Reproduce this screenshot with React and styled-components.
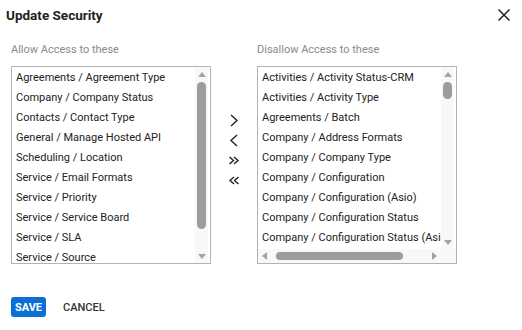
import styled, { createGlobalStyle } from "styled-components";

const GlobalStyle = createGlobalStyle`
  body {
    margin: 0;
    background: #fff;
    font-family: Roboto, "Liberation Sans", sans-serif;
    color: #222;
  }
`;

const Dialog = styled.div`
  width: 522px;
  height: 330px;
  box-sizing: border-box;
  padding: 0 11px;
`;

const Header = styled.div`
  display: flex;
  align-items: center;
  justify-content: space-between;
  height: 30px;
  margin: 0 0 0 -5px;
`;

const Title = styled.h2`
  margin: 0;
  font-size: 13.5px;
  font-weight: 700;
  color: #222;
`;

const CloseButton = styled.button`
  border: 0;
  background: none;
  padding: 0;
  width: 14px;
  height: 14px;
  display: flex;
  cursor: pointer;
`;

const Columns = styled.div`
  display: grid;
  grid-template-columns: 200px 46px 200px;
  margin-top: 13px;
`;

const Label = styled.div`
  font-size: 11px;
  line-height: 14px;
  color: #8a8a8a;
  margin-bottom: 9px;
`;

const ListBox = styled.div`
  height: 198px;
  box-sizing: border-box;
  border: 1px solid #b3b3b3;
  display: grid;
  grid-template-columns: 1fr 15px;
  grid-template-rows: ${(p) => (p.$hscroll ? "1fr 14px" : "1fr")};
  overflow: hidden;
`;

const Items = styled.ul`
  list-style: none;
  margin: 0;
  padding: 1px 0 0 4px;
  overflow: hidden;
`;

const Item = styled.li`
  height: 20px;
  line-height: 20px;
  font-size: 11px;
  white-space: nowrap;
  color: #222;
`;

const VBar = styled.div`
  background: #f8f8f8;
  display: flex;
  flex-direction: column;
  align-items: center;
  padding: 5px 0 4px;
  margin-right: 2px;
`;

const HBar = styled.div`
  background: #f8f8f8;
  display: flex;
  align-items: center;
  padding: 0 4px;
`;

const Corner = styled.div`
  background: #f8f8f8;
`;

const Arrow = styled.span`
  width: 0;
  height: 0;
  flex: none;
  border: 4px solid transparent;
  ${(p) =>
    p.$dir === "up"
      ? "border-bottom: 5px solid #a3a3a3; border-top: 0;"
      : p.$dir === "down"
      ? "border-top: 5px solid #a3a3a3; border-bottom: 0;"
      : p.$dir === "left"
      ? "border-right: 5px solid #a3a3a3; border-left: 0;"
      : "border-left: 5px solid #a3a3a3; border-right: 0;"}
`;

const VThumb = styled.div`
  width: 9px;
  height: ${(p) => p.$size}px;
  margin-top: 5px;
  border-radius: 5px;
  background: #9c9c9c;
`;

const HThumb = styled.div`
  height: 8px;
  width: ${(p) => p.$size}px;
  margin-left: ${(p) => p.$offset}px;
  border-radius: 4px;
  background: #9c9c9c;
`;

const Spacer = styled.div`
  flex: 1;
`;

const MoveColumn = styled.div`
  grid-row: 2;
  grid-column: 2;
  display: flex;
  flex-direction: column;
  align-items: center;
  padding-top: 48px;
  gap: 7px;
`;

const MoveButton = styled.button`
  border: 0;
  background: none;
  padding: 0;
  width: 14px;
  height: 13px;
  display: flex;
  align-items: center;
  justify-content: center;
  cursor: pointer;
`;

const Footer = styled.div`
  display: flex;
  align-items: center;
  gap: 17px;
  margin-top: 33px;
`;

const SaveButton = styled.button`
  border: 0;
  border-radius: 3px;
  background: #0b6fd6;
  color: #fff;
  font-family: inherit;
  font-size: 11px;
  font-weight: 700;
  height: 20px;
  width: 35px;
  padding: 0;
`;

const CancelButton = styled.button`
  border: 0;
  background: none;
  color: #333;
  font-family: inherit;
  font-size: 11px;
  font-weight: 500;
  padding: 0;
`;

const allowed = [
  "Agreements / Agreement Type",
  "Company / Company Status",
  "Contacts / Contact Type",
  "General / Manage Hosted API",
  "Scheduling / Location",
  "Service / Email Formats",
  "Service / Priority",
  "Service / Service Board",
  "Service / SLA",
  "Service / Source",
];

const disallowed = [
  "Activities / Activity Status-CRM",
  "Activities / Activity Type",
  "Agreements / Batch",
  "Company / Address Formats",
  "Company / Company Type",
  "Company / Configuration",
  "Company / Configuration (Asio)",
  "Company / Configuration Status",
  "Company / Configuration Status (Asio)",
];

const Chevron = ({ d }) => (
  <svg width="14" height="13" viewBox="0 0 14 13" fill="none" stroke="#222" strokeWidth="1.4">
    <path d={d} />
  </svg>
);

const App = () => (
  <Dialog>
    <GlobalStyle />
    <Header>
      <Title>Update Security</Title>
      <CloseButton aria-label="close">
        <svg width="14" height="14" viewBox="0 0 14 14" stroke="#222" strokeWidth="1.5">
          <path d="M1.5 1.5 L12.5 12.5 M12.5 1.5 L1.5 12.5" />
        </svg>
      </CloseButton>
    </Header>
    <Columns>
      <Label>Allow Access to these</Label>
      <div />
      <Label>Disallow Access to these</Label>
      <ListBox>
        <Items>
          {allowed.map((name) => (
            <Item key={name}>{name}</Item>
          ))}
        </Items>
        <VBar>
          <Arrow $dir="up" />
          <VThumb $size={147} />
          <Spacer />
          <Arrow $dir="down" />
        </VBar>
      </ListBox>
      <MoveColumn>
        <MoveButton aria-label="move right">
          <Chevron d="M4 1 L10 6.5 L4 12" />
        </MoveButton>
        <MoveButton aria-label="move left">
          <Chevron d="M10 1 L4 6.5 L10 12" />
        </MoveButton>
        <MoveButton aria-label="move all right">
          <Chevron d="M2.5 3 L6.5 6.5 L2.5 10 M7 3 L11 6.5 L7 10" />
        </MoveButton>
        <MoveButton aria-label="move all left">
          <Chevron d="M7 3 L3 6.5 L7 10 M11.5 3 L7.5 6.5 L11.5 10" />
        </MoveButton>
      </MoveColumn>
      <ListBox $hscroll>
        <Items>
          {disallowed.map((name) => (
            <Item key={name}>{name}</Item>
          ))}
        </Items>
        <VBar>
          <Arrow $dir="up" />
          <VThumb $size={17} />
          <Spacer />
          <Arrow $dir="down" />
        </VBar>
        <HBar>
          <Arrow $dir="left" />
          <HThumb $size={127} $offset={9} />
          <Spacer />
          <Arrow $dir="right" />
        </HBar>
        <Corner />
      </ListBox>
    </Columns>
    <Footer>
      <SaveButton>SAVE</SaveButton>
      <CancelButton>CANCEL</CancelButton>
    </Footer>
  </Dialog>
);

export default App;
